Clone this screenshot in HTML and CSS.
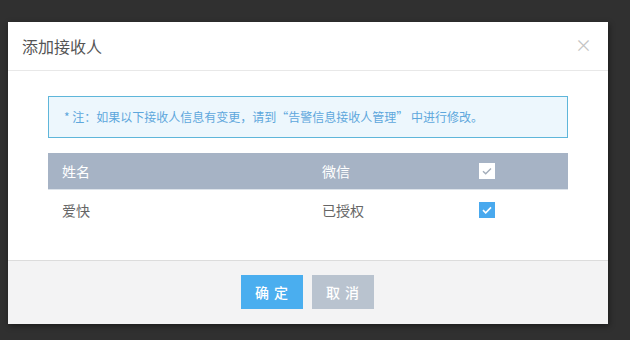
FILE: index.html
```html
<!DOCTYPE html>
<html lang="zh-CN">
<head>
    <meta charset="UTF-8">
    <meta name="viewport" content="width=device-width, initial-scale=1.0">
    <title>添加接收人</title>
    <link rel="stylesheet" href="styles.css">
</head>
<body>
    <div class="modal">
        <div class="modal-header">
            <span class="modal-title">添加接收人</span>
            <span class="modal-close">×</span>
        </div>
        <div class="modal-body">
            <div class="notice">* 注：如果以下接收人信息有变更，请到“告警信息接收人管理” 中进行修改。</div>
            <div class="table">
                <div class="row head">
                    <div class="cell">姓名</div>
                    <div class="cell">微信</div>
                    <div class="cell"><span class="check light"><svg viewBox="0 0 16 16" width="16" height="16"><path d="M4 8.2l2.7 2.6L12 5.4" fill="none" stroke="#a3adba" stroke-width="1.4"/></svg></span></div>
                </div>
                <div class="row">
                    <div class="cell">爱快</div>
                    <div class="cell">已授权</div>
                    <div class="cell"><span class="check on"><svg viewBox="0 0 16 16" width="16" height="16"><path d="M4 8.2l2.7 2.6L12 5.4" fill="none" stroke="#fff" stroke-width="1.6"/></svg></span></div>
                </div>
            </div>
        </div>
        <div class="modal-footer">
            <button class="btn primary">确 定</button>
            <button class="btn cancel">取 消</button>
        </div>
    </div>
</body>
</html>
```

FILE: styles.css
```css
body {
    margin: 0;
    padding: 22px 0 0 8px;
    background: #303030;
    font-family: "Noto Sans CJK SC", "Liberation Sans", sans-serif;
    height: 340px;
    box-sizing: border-box;
    overflow: hidden;
}
.modal {
    width: 600px;
    height: 302px;
    background: #fff;
    box-shadow: 1px 2px 6px rgba(0, 0, 0, 0.45);
    display: flex;
    flex-direction: column;
}
.modal-header {
    height: 48px;
    border-bottom: 1px solid #e8e8e8;
    display: flex;
    align-items: center;
    justify-content: space-between;
    padding: 0 16px 0 14px;
}
.modal-title {
    font-size: 16px;
    color: #555;
}
.modal-close {
    font-size: 17px;
    color: #c4c4c4;
    margin-top: -4px;
}
.modal-body {
    flex: 1;
    padding: 25px 40px 0;
}
.notice {
    height: 40px;
    border: 1px solid #5fb6da;
    background: #edf7fd;
    color: #5ea7dc;
    font-size: 12px;
    line-height: 40px;
    padding-left: 15px;
}
.table {
    margin-top: 15px;
}
.row {
    display: grid;
    grid-template-columns: 260px 157px 1fr;
    height: 40px;
    align-items: center;
    font-size: 14px;
    color: #666;
}
.row.head {
    height: 36px;
    background: #a6b3c5;
    color: #fff;
    border-bottom: 1px solid #dde3ea;
}
.cell {
    padding-left: 14px;
    display: flex;
    align-items: center;
}
.check {
    width: 16px;
    height: 16px;
    display: block;
}
.check svg {
    display: block;
}
.check.light {
    background: #fff;
}
.check.on {
    background: #49a9ee;
}
.modal-footer {
    height: 64px;
    flex: none;
    border-top: 1px solid #dcdcdc;
    background: #f3f3f4;
    display: flex;
    justify-content: center;
    gap: 9px;
    padding-top: 14px;
    padding-right: 1px;
    box-sizing: border-box;
}
.btn {
    width: 62px;
    height: 34px;
    border: none;
    padding: 0;
    color: #fff;
    font-family: inherit;
    font-size: 14px;
    font-weight: 500;
    letter-spacing: 1px;
}
.btn.primary {
    background: #4aaeef;
}
.btn.cancel {
    background: #b9c3cf;
}
```
